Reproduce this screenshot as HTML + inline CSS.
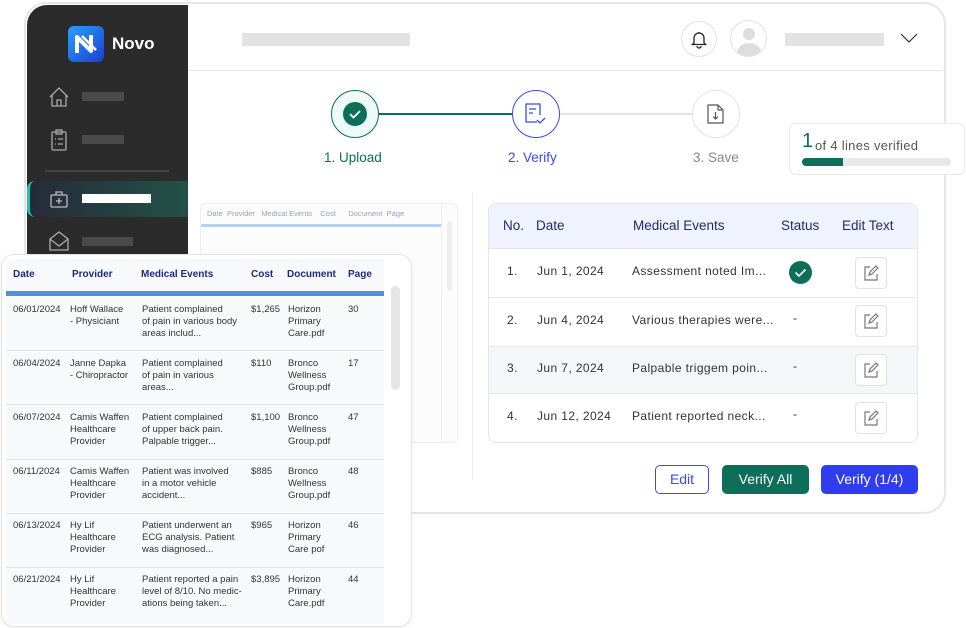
<!DOCTYPE html>
<html><head><style>
*{box-sizing:border-box;margin:0;padding:0}
body{width:966px;height:628px;background:#fff;font-family:"Liberation Sans",sans-serif;position:relative;overflow:hidden}
.a{position:absolute;white-space:nowrap}
.bar{position:absolute;background:#e3e3e3}
.sb{position:absolute;background:#4a4a4a;height:9px}
</style></head><body>
<div class="a" style="left:24px;top:2px;width:922px;height:512px;border:2px solid #e6e6e6;border-radius:22px;background:#fff"></div>
<!-- sidebar -->
<div class="a" style="left:27px;top:5px;width:161px;height:260px;background:#2b2b2b;border-top-left-radius:20px"></div>
<div class="a" style="left:68px;top:26px;width:36px;height:36px;border-radius:6px;background:linear-gradient(135deg,#2aa0ff,#1a3fd0)">
<svg width="36" height="36" viewBox="0 0 36 36"><path d="M9 27V11l14 14V9" stroke="#fff" stroke-width="4" fill="none" stroke-linejoin="round"/><path d="M14 10l14 14" stroke="#fff" stroke-width="2.5"/></svg></div>
<div class="a" style="left:112px;top:34px;color:#fff;font-size:17px;font-weight:bold">Novo</div>
<svg class="a" style="left:48px;top:86px" width="22" height="22" viewBox="0 0 22 22" fill="none" stroke="#aaa" stroke-width="1.3"><path d="M2 11L11 2l9 9M4 9v11h14V9M9 20v-6h4v6"/></svg>
<div class="sb" style="left:82px;top:92px;width:42px"></div>
<svg class="a" style="left:49px;top:129px" width="20" height="22" viewBox="0 0 20 22" fill="none" stroke="#aaa" stroke-width="1.3"><rect x="3" y="3" width="14" height="18" rx="1"/><rect x="7" y="1" width="6" height="4"/><path d="M6 10h1M9 10h5M6 15h1M9 15h5"/></svg>
<div class="sb" style="left:82px;top:135px;width:42px"></div>
<div class="a" style="left:45px;top:170px;width:124px;height:2px;background:#444"></div>
<div class="a" style="left:27px;top:181px;width:161px;height:36px;background:linear-gradient(90deg,#262a3a,#235248);border-left:3px solid #1fc4b0;border-radius:8px 0 0 8px"></div>
<svg class="a" style="left:49px;top:189px" width="20" height="20" viewBox="0 0 20 20" fill="none" stroke="#bbb" stroke-width="1.3"><rect x="2" y="6" width="16" height="12" rx="1"/><path d="M7 6V3h6v3M10 9v6M7 12h6"/></svg>
<div class="a" style="left:82px;top:194px;width:69px;height:9px;background:#fff"></div>
<svg class="a" style="left:48px;top:230px" width="22" height="22" viewBox="0 0 22 22" fill="none" stroke="#aaa" stroke-width="1.3"><path d="M2 9l9-7 9 7v11H2zM2 9l9 7 9-7"/></svg>
<div class="sb" style="left:82px;top:237px;width:51px"></div>
<!-- header -->
<div class="a" style="left:188px;top:70px;width:754px;height:1px;background:#e6e6e6"></div>
<div class="bar" style="left:242px;top:33px;width:168px;height:13px"></div>
<div class="a" style="left:681px;top:21px;width:36px;height:36px;border:1px solid #e0e0e0;border-radius:50%"></div>
<svg class="a" style="left:689px;top:29px" width="20" height="20" viewBox="0 0 20 20" fill="none" stroke="#222" stroke-width="1.3"><path d="M5 14V9a5 5 0 0110 0v5l1.5 1.5h-13zM8 17a2 2 0 004 0M10 3v1"/></svg>
<div class="a" style="left:730px;top:20px;width:37px;height:37px;border:1px solid #e0e0e0;border-radius:50%;overflow:hidden">
<div class="a" style="left:12px;top:7px;width:12px;height:12px;border-radius:50%;background:#ddd"></div>
<div class="a" style="left:6px;top:22px;width:24px;height:20px;border-radius:50%;background:#ddd"></div></div>
<div class="bar" style="left:785px;top:33px;width:99px;height:13px"></div>
<svg class="a" style="left:900px;top:33px" width="18" height="11" viewBox="0 0 18 11" fill="none" stroke="#333" stroke-width="1.2"><path d="M1 1l8 8 8-8"/></svg>
<!-- steps -->
<div class="a" style="left:379px;top:113px;width:133px;height:1.5px;background:#0d6e5a"></div>
<div class="a" style="left:560px;top:113px;width:132px;height:1.5px;background:#e3e3e3"></div>
<div class="a" style="left:331px;top:90px;width:48px;height:48px;border:1.5px solid #0d6e5a;border-radius:50%;background:#edfaf6"></div>
<div class="a" style="left:343px;top:102px;width:24px;height:24px;border-radius:50%;background:#0d6e5a"></div>
<svg class="a" style="left:343px;top:102px" width="24" height="24"><path d="M7 12l3.5 3.5L17 9" stroke="#fff" stroke-width="1.8" fill="none"/></svg>
<div class="a" style="left:512px;top:90px;width:48px;height:48px;border:1.5px solid #3a49f0;border-radius:50%;background:#fff"></div>
<svg class="a" style="left:524px;top:102px" width="24" height="24" fill="none" stroke="#3a49f0" stroke-width="1.3"><path d="M13 20H2V2h14v11M5 7h7M5 11h4M13 18l3 3 5-5"/></svg>
<div class="a" style="left:692px;top:90px;width:48px;height:48px;border:1.5px solid #e3e3e3;border-radius:50%;background:#fff"></div>
<svg class="a" style="left:706px;top:103px" width="20" height="22" fill="none" stroke="#555" stroke-width="1.2"><path d="M2 2h10l5 5v13H2zM12 2v5h5M9.5 9v7M7 13.5l2.5 2.5 2.5-2.5"/></svg>
<div class="a" style="left:324px;top:150px;font-size:13.5px;color:#0d6e5a">1. Upload</div>
<div class="a" style="left:508px;top:150px;font-size:13.5px;color:#3a49f0">2. Verify</div>
<div class="a" style="left:693px;top:150px;font-size:13.5px;color:#888">3. Save</div>
<!-- progress -->
<div class="a" style="left:789px;top:123px;width:176px;height:52px;border:1.5px solid #e8e8e8;border-radius:7px;background:#fff"></div>
<div class="a" style="left:802px;top:130px;color:#0d6e5a;font-size:20px">1</div>
<div class="a" style="left:815px;top:138px;color:#555;font-size:13px;letter-spacing:.3px">of 4 lines verified</div>
<div class="a" style="left:802px;top:158px;width:149px;height:8px;border-radius:4px;background:#e8e8e8"></div>
<div class="a" style="left:802px;top:158px;width:41px;height:8px;border-radius:4px 0 0 4px;background:#0d6e5a"></div>
<!-- divider -->
<div class="a" style="left:472px;top:193px;width:1px;height:287px;background:#ececec"></div>
<!-- faint bg table -->
<div class="a" style="left:200px;top:203px;width:258px;height:240px;border:1px solid #eee;border-radius:6px;background:#fcfcfd;overflow:hidden">
<div class="a" style="left:6px;top:5px;font-size:7.5px;color:#9aa0c0;white-space:nowrap">Date&nbsp;&nbsp;Provider&nbsp;&nbsp;&nbsp;Medical Events&nbsp;&nbsp;&nbsp;&nbsp;Cost&nbsp;&nbsp;&nbsp;&nbsp;&nbsp;&nbsp;Document&nbsp;&nbsp;Page</div>
<div class="a" style="left:0;top:20px;width:240px;height:3px;background:#b6d3f5"></div>
<div class="a" style="left:240px;top:0;width:1px;height:240px;background:#eee"></div>
<div class="a" style="left:246px;top:17px;width:5px;height:70px;border-radius:3px;background:#eee"></div>
</div>
<!-- verify table -->
<div class="a" style="left:488px;top:203px;width:430px;height:240px;border:1.5px solid #e4e6ec;border-radius:8px;overflow:hidden;background:#fff">
<div style="height:45px;background:#f0f3fd;border-bottom:1px solid #e4e6ec;position:relative;color:#1f2a6e;font-size:13.5px">
<span class="a" style="left:14px;top:14px">No.</span><span class="a" style="left:47px;top:14px">Date</span><span class="a" style="left:144px;top:14px">Medical Events</span><span class="a" style="left:292px;top:14px">Status</span><span class="a" style="left:353px;top:14px">Edit Text</span></div>
</div>
<div class="a" style="left:655px;top:465px;width:54px;height:29px;border:1.5px solid #3a49f0;border-radius:5px;color:#3a49f0;font-size:14px;text-align:center;line-height:26px">Edit</div>
<div class="a" style="left:722px;top:465px;width:87px;height:29px;background:#0d6e5a;border-radius:5px;color:#fff;font-size:14px;text-align:center;line-height:29px">Verify All</div>
<div class="a" style="left:821px;top:465px;width:97px;height:29px;background:#2f3cf0;border-radius:5px;color:#fff;font-size:14px;text-align:center;line-height:29px">Verify (1/4)</div>

<div class="a" style="left:489px;top:297px;width:428px;height:1px;background:#e6e6e6"></div>
<div class="a" style="left:489px;top:346px;width:428px;height:48px;background:#f5f6f8;border-top:1px solid #e6e6e6;border-bottom:1px solid #e6e6e6"></div>
<div style="position:absolute;left:0;top:0;font-size:12px;color:#333;letter-spacing:.4px">
<span class="a" style="left:507px;top:264px">1.</span><span class="a" style="left:537px;top:264px">Jun 1, 2024</span><span class="a" style="left:632px;top:264px">Assessment noted Im...</span>
<span class="a" style="left:507px;top:313px">2.</span><span class="a" style="left:537px;top:313px">Jun 4, 2024</span><span class="a" style="left:632px;top:313px">Various therapies were...</span><span class="a" style="left:793px;top:311px">-</span>
<span class="a" style="left:507px;top:361px">3.</span><span class="a" style="left:537px;top:361px">Jun 7, 2024</span><span class="a" style="left:632px;top:361px">Palpable triggem poin...</span><span class="a" style="left:793px;top:359px">-</span>
<span class="a" style="left:507px;top:409px">4.</span><span class="a" style="left:537px;top:409px">Jun 12, 2024</span><span class="a" style="left:632px;top:409px">Patient reported neck...</span><span class="a" style="left:793px;top:407px">-</span>
</div>
<div class="a" style="left:789px;top:261px;width:23px;height:23px;border-radius:50%;background:#0d6e5a"></div>
<svg class="a" style="left:789px;top:261px" width="23" height="23"><path d="M6.5 11.5l3.5 3.5 6.5-6.5" stroke="#fff" stroke-width="1.6" fill="none"/></svg>
<div class="a" style="left:855px;top:257px;width:32px;height:32px;border:1px solid #e2e2e2;border-radius:4px;background:#fff"></div>
<div class="a" style="left:855px;top:305px;width:32px;height:32px;border:1px solid #e2e2e2;border-radius:4px;background:#fff"></div>
<div class="a" style="left:855px;top:354px;width:32px;height:32px;border:1px solid #e2e2e2;border-radius:4px;background:#fff"></div>
<div class="a" style="left:855px;top:402px;width:32px;height:32px;border:1px solid #e2e2e2;border-radius:4px;background:#fff"></div>
<svg class="a" style="left:863px;top:265px" width="16" height="16" fill="none" stroke="#777" stroke-width="1.2"><path d="M7 2H2v13h12V9M6 10l1-3 6-6 2 2-6 6z"/></svg>
<svg class="a" style="left:863px;top:313px" width="16" height="16" fill="none" stroke="#777" stroke-width="1.2"><path d="M7 2H2v13h12V9M6 10l1-3 6-6 2 2-6 6z"/></svg>
<svg class="a" style="left:863px;top:362px" width="16" height="16" fill="none" stroke="#777" stroke-width="1.2"><path d="M7 2H2v13h12V9M6 10l1-3 6-6 2 2-6 6z"/></svg>
<svg class="a" style="left:863px;top:410px" width="16" height="16" fill="none" stroke="#777" stroke-width="1.2"><path d="M7 2H2v13h12V9M6 10l1-3 6-6 2 2-6 6z"/></svg>

<!-- overlay table -->
<div class="a" style="left:1px;top:254px;width:411px;height:373px;border:1.5px solid #e4e4e4;border-radius:13px;background:#fff;overflow:hidden;box-shadow:0 2px 6px rgba(0,0,0,.05)">
<div class="a" style="left:4px;top:4px;width:378px;height:365px;background:#f8f9fb"></div>
<div class="a" style="left:4px;top:36px;width:378px;height:5px;background:#4e92e0"></div>
<div class="a" style="left:389px;top:31px;width:9px;height:104px;border-radius:5px;background:#e6e6e6"></div>
<div style="position:absolute;left:0;top:0;font-size:10px;color:#1f2a7a;font-weight:bold">
<span class="a" style="left:11px;top:14px">Date</span><span class="a" style="left:70px;top:14px">Provider</span><span class="a" style="left:139px;top:14px">Medical Events</span><span class="a" style="left:249px;top:14px">Cost</span><span class="a" style="left:285px;top:14px">Document</span><span class="a" style="left:346px;top:14px">Page</span></div>
<div style="position:absolute;left:0;top:0;font-size:9.5px;color:#333;line-height:12px">
<div class="a" style="left:4px;top:95px;width:378px;height:1px;background:#e2e2e2"></div>
<div class="a" style="left:4px;top:149px;width:378px;height:1px;background:#e2e2e2"></div>
<div class="a" style="left:4px;top:204px;width:378px;height:1px;background:#e2e2e2"></div>
<div class="a" style="left:4px;top:258px;width:378px;height:1px;background:#e2e2e2"></div>
<div class="a" style="left:4px;top:312px;width:378px;height:1px;background:#e2e2e2"></div>

<span class="a" style="left:11px;top:49px">06/01/2024</span><span class="a" style="left:68px;top:49px">Hoff Wallace<br>- Physiciant</span><span class="a" style="left:140px;top:49px">Patient complained<br>of pain in various body<br>areas includ...</span><span class="a" style="left:249px;top:49px">$1,265</span><span class="a" style="left:286px;top:49px">Horizon<br>Primary<br>Care.pdf</span><span class="a" style="left:346px;top:49px">30</span>

<span class="a" style="left:11px;top:103px">06/04/2024</span><span class="a" style="left:68px;top:103px">Janne Dapka<br>- Chiropractor</span><span class="a" style="left:140px;top:103px">Patient complained<br>of pain in various<br>areas...</span><span class="a" style="left:249px;top:103px">$110</span><span class="a" style="left:286px;top:103px">Bronco<br>Wellness<br>Group.pdf</span><span class="a" style="left:346px;top:103px">17</span>

<span class="a" style="left:11px;top:157px">06/07/2024</span><span class="a" style="left:68px;top:157px">Camis Waffen<br>Healthcare<br>Provider</span><span class="a" style="left:140px;top:157px">Patient complained<br>of upper back pain.<br>Palpable trigger...</span><span class="a" style="left:249px;top:157px">$1,100</span><span class="a" style="left:286px;top:157px">Bronco<br>Wellness<br>Group.pdf</span><span class="a" style="left:346px;top:157px">47</span>

<span class="a" style="left:11px;top:211px">06/11/2024</span><span class="a" style="left:68px;top:211px">Camis Waffen<br>Healthcare<br>Provider</span><span class="a" style="left:140px;top:211px">Patient was involved<br>in a motor vehicle<br>accident...</span><span class="a" style="left:249px;top:211px">$885</span><span class="a" style="left:286px;top:211px">Bronco<br>Wellness<br>Group.pdf</span><span class="a" style="left:346px;top:211px">48</span>

<span class="a" style="left:11px;top:265px">06/13/2024</span><span class="a" style="left:68px;top:265px">Hy Lif<br>Healthcare<br>Provider</span><span class="a" style="left:140px;top:265px">Patient underwent an<br>ECG analysis. Patient<br>was diagnosed...</span><span class="a" style="left:249px;top:265px">$965</span><span class="a" style="left:286px;top:265px">Horizon<br>Primary<br>Care pof</span><span class="a" style="left:346px;top:265px">46</span>

<span class="a" style="left:11px;top:319px">06/21/2024</span><span class="a" style="left:68px;top:319px">Hy Lif<br>Healthcare<br>Provider</span><span class="a" style="left:140px;top:319px">Patient reported a pain<br>level of 8/10. No medic-<br>ations being taken...</span><span class="a" style="left:249px;top:319px">$3,895</span><span class="a" style="left:286px;top:319px">Horizon<br>Primary<br>Care.pdf</span><span class="a" style="left:346px;top:319px">44</span>
</div>
</div>
</body></html>
